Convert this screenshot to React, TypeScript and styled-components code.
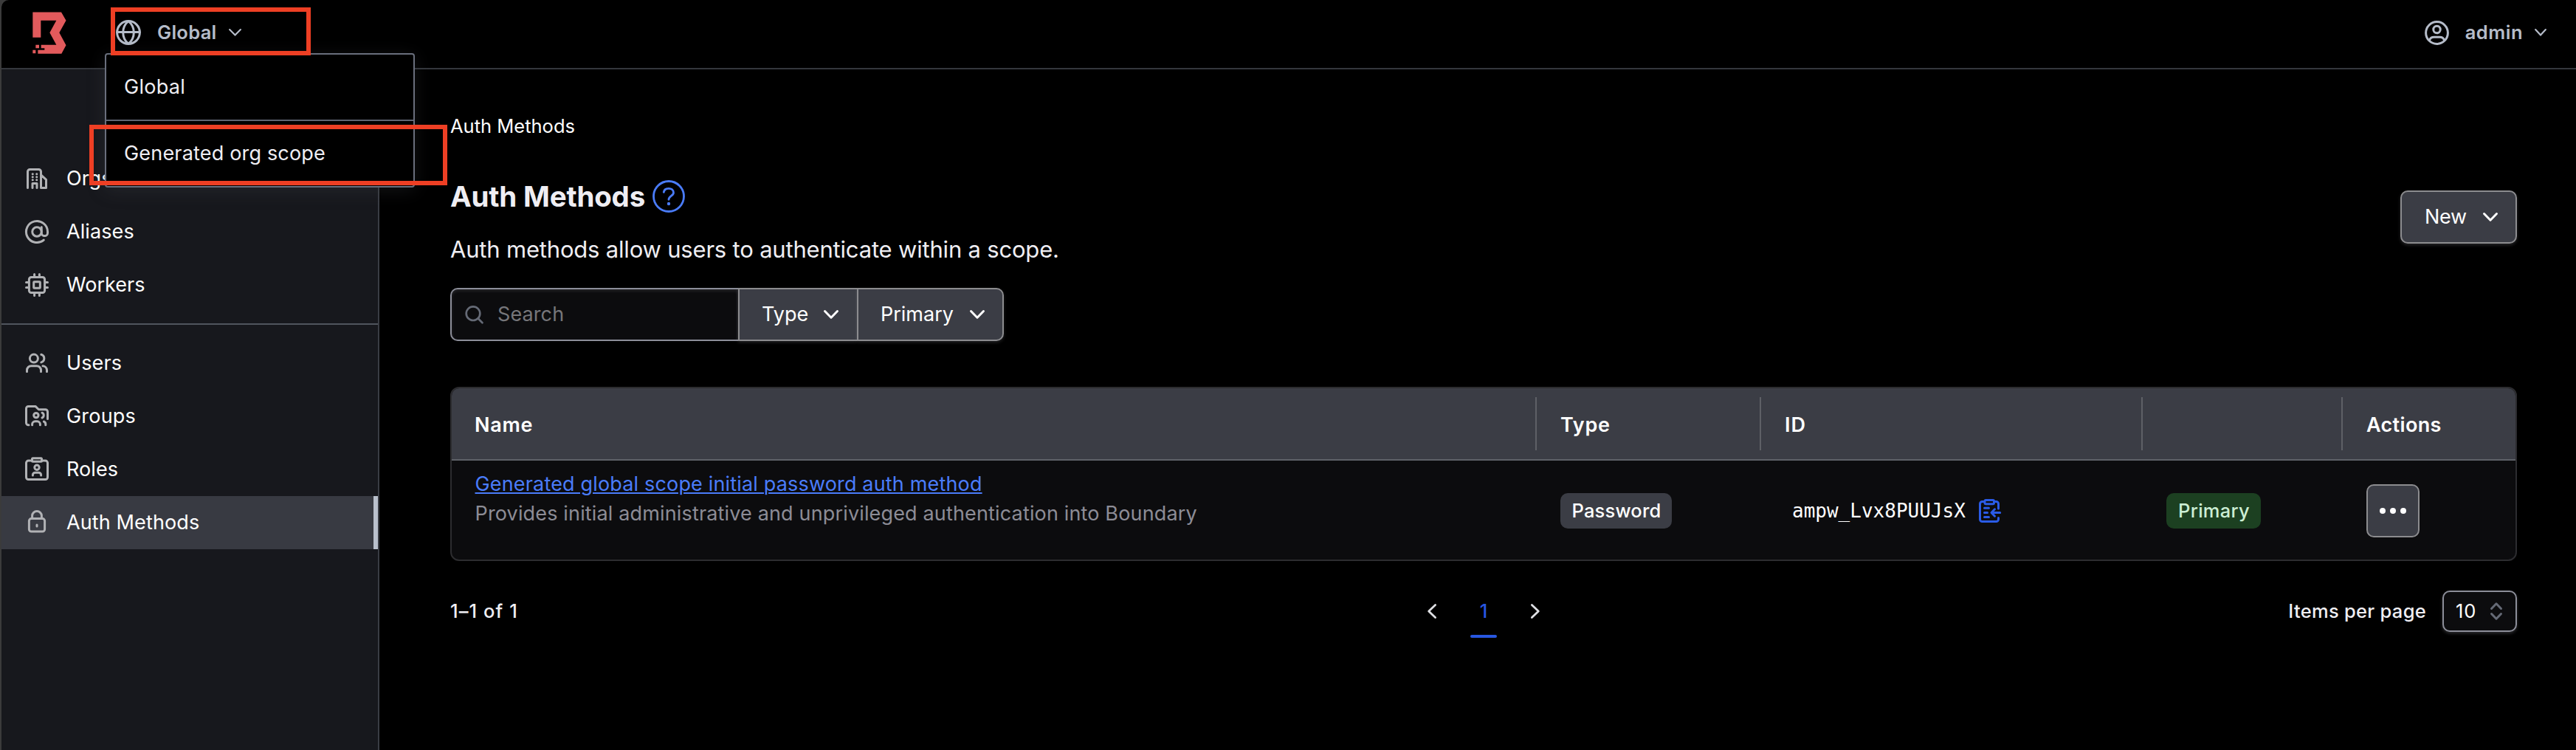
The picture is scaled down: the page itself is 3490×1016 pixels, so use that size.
import React from "react";
import styled, { createGlobalStyle, css } from "styled-components";

const GlobalStyle = createGlobalStyle`
  * { box-sizing: border-box; }
  body {
    margin: 0;
    background: #000;
    font-family: Inter, "Liberation Sans", sans-serif;
    -webkit-font-smoothing: antialiased;
  }
`;

const Window = styled.div`
  position: relative;
  width: 3490px;
  height: 1016px;
  padding-left: 2px;
  background: #3b3b3b;
  overflow: hidden;
`;

const Frame = styled.div`
  display: flex;
  flex-direction: column;
  height: 100%;
  background: #000;
  border-top-left-radius: 10px;
  overflow: hidden;
`;

type TypeProps = { $size?: number; $weight?: number; $track?: number; $color?: string };

const Text = styled.span<TypeProps>`
  font-size: ${(p) => p.$size ?? 27}px;
  font-weight: ${(p) => p.$weight ?? 400};
  letter-spacing: ${(p) => p.$track ?? 0}px;
  color: ${(p) => p.$color ?? "#fff"};
  line-height: 40px;
  white-space: nowrap;
`;

/* Header */

const Header = styled.header`
  flex: none;
  display: flex;
  align-items: center;
  justify-content: space-between;
  height: 94px;
  padding: 0 40px 4px 42px;
  border-bottom: 2px solid #34373d;
`;

const HeaderGroup = styled.div`
  display: flex;
  align-items: center;
`;

const HeaderButton = styled.div<{ $offset?: number; $gap: number }>`
  display: flex;
  align-items: center;
  gap: ${(p) => p.$gap}px;
  margin-left: ${(p) => p.$offset ?? 0}px;
  color: #b5bcc9;
`;

const HeaderLabel = styled(Text)<{ $gap: number }>`
  display: inline-flex;
  align-items: center;
  gap: ${(p) => p.$gap}px;
`;

const ScopeMenu = styled.div`
  position: absolute;
  top: 72px;
  left: 142px;
  width: 420px;
  height: 182px;
  background: #000;
  border: 2px solid #6a6f7d;
  border-radius: 4px;
  box-shadow: 0 4px 24px rgba(70, 72, 80, 0.28);
`;

const ScopeItem = styled.div`
  display: flex;
  align-items: center;
  height: 90px;
  padding-left: 24px;

  &:first-child {
    border-bottom: 2px solid #5f6471;
  }

  & + & {
    height: 88px;
    padding-bottom: 1px;
  }
`;

const Highlight = styled.div<{ $x: number; $y: number; $w: number; $h: number }>`
  position: absolute;
  left: ${(p) => p.$x}px;
  top: ${(p) => p.$y}px;
  width: ${(p) => p.$w}px;
  height: ${(p) => p.$h}px;
  border: 6px solid #ee3f24;
`;

/* Body */

const Body = styled.div`
  flex: 1;
  display: flex;
  min-height: 0;
`;

const Sidebar = styled.nav`
  flex: none;
  width: 512px;
  padding-top: 112px;
  background: #17181d;
  border-right: 2px solid #3a3d44;
`;

const NavItem = styled.a<{ $active?: boolean }>`
  display: flex;
  align-items: center;
  gap: 24px;
  height: 72px;
  padding-left: 32px;
  color: #b1b2b5;
  ${(p) =>
    p.$active &&
    css`
      background: #383a42;
      border-right: 6px solid #b9c0cc;
    `}
`;

const NavDivider = styled.div`
  height: 2px;
  margin: 16px 0;
  background: #50555e;
`;

const Main = styled.main`
  flex: 1;
  display: flex;
  flex-direction: column;
  padding: 57px 80px 0 96px;
`;

const PageHeader = styled.div`
  display: flex;
  justify-content: space-between;
  align-items: flex-start;
  height: 239px;
`;

const HeadingBlock = styled.div`
  display: flex;
  flex-direction: column;
  align-items: flex-start;
`;

const TitleRow = styled.div`
  display: flex;
  align-items: center;
  gap: 10px;
  height: 56px;
  margin: 47px 0 24px;
`;

const Title = styled.h1`
  margin: 0;
  font-size: 38.5px;
  font-weight: 700;
  letter-spacing: -0.2px;
  line-height: 56px;
  color: #efeef3;
`;

const buttonSkin = css`
  background: #3b3d45;
  border: 2px solid #8c8c8f;
`;

const NewButton = styled.button`
  ${buttonSkin}
  display: flex;
  align-items: center;
  gap: 22px;
  width: 158px;
  height: 72px;
  margin-top: 107px;
  padding: 0 0 0 31px;
  border-radius: 10px;
  box-shadow: 0 2px 4px rgba(150, 150, 160, 0.25);
  font-family: inherit;
`;

const FilterBar = styled.div`
  display: flex;
  height: 72px;
`;

const SearchBox = styled.div`
  display: flex;
  align-items: center;
  gap: 19px;
  width: 390px;
  padding-left: 18px;
  background: #0c0c0e;
  border: 2px solid #8c8e99;
  border-right: 0;
  border-radius: 10px 0 0 10px;
  box-shadow: inset 0 2px 4px rgba(150, 150, 160, 0.2);
`;

const FilterButton = styled.button<{ $width: number; $last?: boolean; $gap: number }>`
  ${buttonSkin}
  display: flex;
  align-items: center;
  gap: ${(p) => p.$gap}px;
  width: ${(p) => p.$width}px;
  padding: 0 0 0 30px;
  border-right-width: ${(p) => (p.$last ? 2 : 0)}px;
  border-radius: ${(p) => (p.$last ? "0 10px 10px 0" : 0)};
  box-shadow: 0 2px 4px rgba(150, 150, 160, 0.22);
  font-family: inherit;
`;

const Table = styled.div`
  margin-top: 62px;
  border: 2px solid #2c2c2f;
  border-radius: 12px;
  background: #0c0c0e;
  overflow: hidden;
`;

const Row = styled.div`
  display: grid;
  grid-template-columns: 1468px 304px 517px 271px 1fr;
`;

const HeadRow = styled(Row)`
  height: 98px;
  background: #3b3d45;
  border-bottom: 2px solid #5f6168;
`;

const HeadCell = styled.div`
  display: flex;
  align-items: center;
  margin: 12px 0;
  padding: 4px 0 0 31px;

  & + & {
    padding-left: 32px;
    border-left: 2px solid #5e6066;
  }
`;

const BodyRow = styled(Row)`
  height: 134px;
`;

const Cell = styled.div`
  display: flex;
  align-items: center;
  padding: 2px 0 0 34px;
`;

const NameCell = styled.div`
  display: flex;
  flex-direction: column;
  padding: 12px 0 0 31.5px;
`;

const NameLink = styled(Text)`
  text-decoration: underline;
  text-decoration-thickness: 2px;
  text-underline-offset: 2px;
`;

const Badge = styled.span<{ $width: number; $bg: string }>`
  display: flex;
  align-items: center;
  justify-content: center;
  width: ${(p) => p.$width}px;
  height: 48px;
  padding-left: 1px;
  border-radius: 10px;
  background: ${(p) => p.$bg};
`;

const Mono = styled.span`
  margin: 0 18px 0 10px;
  font: 26px/40px "DejaVu Sans Mono", monospace;
  color: #fff;
`;

const MoreButton = styled.button`
  ${buttonSkin}
  display: flex;
  align-items: center;
  justify-content: center;
  gap: 6px;
  width: 72px;
  height: 72px;
  padding: 0;
  border-radius: 10px;
`;

const Dot = styled.i`
  width: 8px;
  height: 8px;
  border-radius: 50%;
  background: #fff;
`;

const Pagination = styled.div`
  display: grid;
  grid-template-columns: 1fr auto 1fr;
  height: 64px;
  margin-top: 40px;
`;

const PageInfo = styled.div`
  display: flex;
  align-items: center;
  height: 56px;
`;

const Pager = styled.div`
  display: flex;
  gap: 36px;
`;

const PagerArrow = styled.div`
  display: flex;
  align-items: center;
  justify-content: center;
  width: 32px;
  height: 56px;
`;

const CurrentPage = styled.div`
  display: flex;
  flex-direction: column;
  align-items: center;
  justify-content: space-between;
  width: 36px;
  height: 64px;
  padding-top: 8px;

  &::after {
    content: "";
    width: 36px;
    height: 4px;
    border-radius: 2px;
    background: #2857e0;
  }
`;

const PageSize = styled.div`
  display: flex;
  align-items: center;
  justify-content: flex-end;
  gap: 22px;
  height: 56px;
`;

const Select = styled.div`
  display: flex;
  align-items: center;
  justify-content: space-between;
  width: 101px;
  height: 56px;
  padding: 0 18px 0 16px;
  background: #0c0c0e;
  border: 2px solid #8c8e99;
  border-radius: 10px;
  box-shadow: 0 2px 4px rgba(150, 150, 160, 0.3);
`;

/* Icons */

const Stroke = styled.svg<{ $sw?: number; $color?: string }>`
  flex: none;
  display: block;
  overflow: visible;
  color: ${(p) => p.$color ?? "inherit"};
  fill: none;
  stroke: currentColor;
  stroke-width: ${(p) => p.$sw ?? 1.5};
  stroke-linecap: round;
  stroke-linejoin: round;
`;

const NavIcon = ({ children }: { children: React.ReactNode }) => (
  <Stroke width="32" height="32" viewBox="0 0 16 16">{children}</Stroke>
);

const Logo = () => (
  <svg width="46" height="57" viewBox="131 46 138 170" fill="#e25a5c">
    <path d="M132 47H248L267.500 81L240 130L267.500 181L249 215.500H153V201H180V193H166V180H228L201 130L228 81H165V150H132Z" />
    <path d="M144 180H158V193H144ZM132 201H144V214H132Z" />
  </svg>
);

const Globe = () => (
  <Stroke width="34" height="34" viewBox="0 0 34 34" $sw={3}>
    <circle cx="17" cy="17" r="15.4" />
    <path d="M1.600 16.500H32.400" />
    <path d="M17 1.600C12.200 5.500 9.700 11 9.700 17S12.200 28.500 17 32.400C21.800 28.500 24.300 23 24.300 17S21.800 5.500 17 1.600Z" />
  </Stroke>
);

const UserCircle = () => (
  <Stroke width="33" height="33" viewBox="0 0 33 33" $sw={3}>
    <circle cx="16.500" cy="16.500" r="14.900" />
    <circle cx="16.500" cy="12" r="4.700" />
    <path d="M6.500 26.500C7.500 23.500 9.500 22.300 12.500 22.300H20.500C23.500 22.300 25.500 23.500 26.500 26.500" />
  </Stroke>
);

type ChevronProps = { w: number; h: number; sw: number; color: string };
const Chevron = ({ w, h, sw, color }: ChevronProps) => (
  <Stroke width={w} height={h} viewBox={`0 0 ${w} ${h}`} $sw={sw} $color={color}>
    <path d={`M${sw / 2} ${sw / 2}L${w / 2} ${h - sw / 2 - 0.3}L${w - sw / 2} ${sw / 2}`} />
  </Stroke>
);

const Help = () => (
  <Stroke width="44" height="44" viewBox="0 0 44 44" $sw={2.8} $color="#4a7cfb">
    <circle cx="22" cy="22" r="20.500" />
    <path d="M15.300 16.300C15.800 13 18.400 11.300 21.900 11.300C25.700 11.300 28.500 13.400 28.500 16.900C28.500 21.500 22 21.300 22 26.300" />
    <circle cx="22" cy="32" r="2.200" fill="currentColor" stroke="none" />
  </Stroke>
);

const SearchIcon = () => (
  <Stroke width="25" height="25" viewBox="0 0 25 25" $sw={2.7} $color="#656a76">
    <circle cx="11" cy="10.700" r="9.300" />
    <path d="M17.800 17.500L23.500 23.300" />
  </Stroke>
);

const ClipboardCopy = () => (
  <Stroke width="30" height="32" viewBox="0 0 30 32" $sw={3} $color="#2a5be6">
    <path d="M7 3.500H4.500A3 3 0 0 0 1.500 6.500V27.500A3 3 0 0 0 4.500 30.500H23.500A3 3 0 0 0 26.500 27.500V25.500" />
    <path d="M21 3.500H23.500A3 3 0 0 1 26.500 6.500V13" />
    <rect x="8" y="1.500" width="12.500" height="5.200" rx="1.500" />
    <path d="M7.500 12.300H13.500M7.500 18.400H11.500M7.500 24.600H13.500M17.300 18.500H28.700M21.500 13.800L17 18.500L21.500 23.200" />
  </Stroke>
);

const Sort = () => (
  <Stroke width="16" height="24" viewBox="0 0 16 24" $sw={3} $color="#656a76">
    <path d="M1.500 8.500L8 1.800L14.500 8.500M1.500 15.500L8 22.200L14.500 15.500" />
  </Stroke>
);

const OrgIcon = () => (
  <NavIcon>
    <path d="M1.750 14.250V3.250A1.500 1.500 0 0 1 3.250 1.750H9.250A1.500 1.500 0 0 1 10.750 3.250V14.250H14.250V8.700L11 5.700M5 14.250V11.250H8V14.250" />
    <path d="M5.100 4.900H5.150M7.850 4.900H7.900M5.100 6.900H5.150M7.850 6.900H7.900M5.100 8.900H5.150M7.850 8.900H7.900" />
  </NavIcon>
);

const AtIcon = () => (
  <Stroke width="32" height="32" viewBox="1 1 22 22" $sw={2.05}>
    <circle cx="12" cy="12" r="4.300" />
    <path d="M16.300 7.700v5.300a2.850 2.850 0 0 0 5.700 0v-1a10 10 0 1 0-3.600 7.700" />
  </Stroke>
);

const CpuIcon = () => (
  <NavIcon>
    <rect x="2.700" y="2.700" width="10.600" height="10.600" rx="1.500" />
    <rect x="5.850" y="5.850" width="4.300" height="4.300" rx="0.400" />
    <path d="M6.300 .75V2M9.700 .75V2M6.300 14V15.250M9.700 14V15.250M.75 6.300H2M.75 9.700H2M14 6.300H15.250M14 9.700H15.250" />
  </NavIcon>
);

const UsersIcon = () => (
  <NavIcon>
    <circle cx="5.950" cy="4.800" r="2.750" />
    <path d="M1.250 13.750V12.750A2.900 2.900 0 0 1 4.150 9.850H7.850A2.900 2.900 0 0 1 10.750 12.750V13.750M10.900 2.150A2.750 2.750 0 0 1 10.900 7.450M12 9.900A2.900 2.900 0 0 1 14.750 12.750V13.750" />
  </NavIcon>
);

const GroupsIcon = () => (
  <NavIcon>
    <path d="M2.500 13.900H2.250A1.500 1.500 0 0 1 .75 12.400V2.700A1.500 1.500 0 0 1 2.250 1.200H7L9.200 3.350H13.750A1.500 1.500 0 0 1 15.250 4.850V9.700" />
    <circle cx="7.450" cy="7.300" r="1.600" />
    <path d="M4.800 13.900V13.400A2 2 0 0 1 6.800 11.400H8.200A2 2 0 0 1 10.200 13.400V13.900M11.500 5.600A1.850 1.850 0 0 1 11.500 9M12.700 11.500A2 2 0 0 1 13.900 13.400V13.900" />
  </NavIcon>
);

const RolesIcon = () => (
  <NavIcon>
    <path d="M4.500 2.050H2.250A1.500 1.500 0 0 0 .75 3.550V13.250A1.500 1.500 0 0 0 2.250 14.750H13.750A1.500 1.500 0 0 0 15.250 13.250V3.550A1.500 1.500 0 0 0 13.750 2.050H11.500" />
    <rect x="4.750" y="0.350" width="6.500" height="2.300" rx="0.500" />
    <circle cx="8" cy="6.600" r="1.600" />
    <path d="M5.200 12V11.700A1.600 1.600 0 0 1 6.800 10.100H9.200A1.600 1.600 0 0 1 10.800 11.700V12" />
  </NavIcon>
);

const LockIcon = () => (
  <NavIcon>
    <rect x="2.700" y="5.300" width="10.600" height="8.700" rx="1.500" />
    <path d="M4.800 5V3.300A3.200 3 0 0 1 11.200 3.300V5M8 9.500V10.500" />
  </NavIcon>
);

const nav = [
  [
    { label: "Orgs", icon: <OrgIcon />, track: 0.1 },
    { label: "Aliases", icon: <AtIcon />, track: 0.1 },
    { label: "Workers", icon: <CpuIcon />, track: 0 },
  ],
  [
    { label: "Users", icon: <UsersIcon />, track: 0.1 },
    { label: "Groups", icon: <GroupsIcon />, track: 0.2 },
    { label: "Roles", icon: <RolesIcon />, track: 0.1 },
    { label: "Auth Methods", icon: <LockIcon />, track: 0.12, active: true },
  ],
];

const columns = [
  { label: "Name", track: 0.7 },
  { label: "Type", track: 0.7 },
  { label: "ID", track: 1 },
  { label: "", track: 0 },
  { label: "Actions", track: 0.33 },
];

export default function App() {
  return (
    <Window>
      <GlobalStyle />
      <Frame>
        <Header>
          <HeaderGroup>
            <Logo />
            <HeaderButton $offset={67} $gap={22}>
              <Globe />
              <HeaderLabel $gap={16} $size={25.5} $weight={600} $track={0.3} $color="#b5bcc9">
                Global
                <Chevron w={17} h={10} sw={2.2} color="#b5bcc9" />
              </HeaderLabel>
            </HeaderButton>
          </HeaderGroup>
          <HeaderButton $gap={22}>
            <UserCircle />
            <HeaderLabel $gap={16} $size={25.5} $weight={600} $track={0.5} $color="#b5bcc9">
              admin
              <Chevron w={16} h={10} sw={2.2} color="#b5bcc9" />
            </HeaderLabel>
          </HeaderButton>
        </Header>
        <Body>
          <Sidebar>
            {nav.map((group, i) => (
              <React.Fragment key={i}>
                {i > 0 && <NavDivider />}
                {group.map((item) => (
                  <NavItem key={item.label} $active={"active" in item}>
                    {item.icon}
                    <Text $track={item.track}>{item.label}</Text>
                  </NavItem>
                ))}
              </React.Fragment>
            ))}
          </Sidebar>
          <Main>
            <PageHeader>
              <HeadingBlock>
                <Text $size={25.5}>Auth Methods</Text>
                <TitleRow>
                  <Title>Auth Methods</Title>
                  <Help />
                </TitleRow>
                <Text $size={31} $track={-0.19} $color="#efeef3">
                  Auth methods allow users to authenticate within a scope.
                </Text>
              </HeadingBlock>
              <NewButton>
                <Text $track={-0.3}>New</Text>
                <Chevron w={20} h={12} sw={3} color="#fff" />
              </NewButton>
            </PageHeader>
            <FilterBar>
              <SearchBox>
                <SearchIcon />
                <Text $track={0.1} $color="#76767a">Search</Text>
              </SearchBox>
              <FilterButton $width={161} $gap={21}>
                <Text>Type</Text>
                <Chevron w={20} h={12} sw={3} color="#fff" />
              </FilterButton>
              <FilterButton $width={199} $gap={22} $last>
                <Text>Primary</Text>
                <Chevron w={20} h={12} sw={3} color="#fff" />
              </FilterButton>
            </FilterBar>
            <Table>
              <HeadRow>
                {columns.map((c, i) => (
                  <HeadCell key={i}>
                    <Text $weight={600} $track={c.track}>{c.label}</Text>
                  </HeadCell>
                ))}
              </HeadRow>
              <BodyRow>
                <NameCell>
                  <div>
                    <NameLink $track={0.165} $color="#4a7cfb">
                      Generated global scope initial password auth method
                    </NameLink>
                  </div>
                  <Text $track={0.153} $color="#8c8c96">
                    Provides initial administrative and unprivileged authentication into Boundary
                  </Text>
                </NameCell>
                <Cell>
                  <Badge $width={151} $bg="#3b3d45">
                    <Text $size={25.5} $weight={500} $track={0.19}>Password</Text>
                  </Badge>
                </Cell>
                <Cell>
                  <Mono>ampw_Lvx8PUUJsX</Mono>
                  <ClipboardCopy />
                </Cell>
                <Cell>
                  <Badge $width={128} $bg="#1c4021">
                    <Text $size={25.5} $weight={500} $track={0.25} $color="#cceed4">Primary</Text>
                  </Badge>
                </Cell>
                <Cell>
                  <MoreButton>
                    <Dot />
                    <Dot />
                    <Dot />
                  </MoreButton>
                </Cell>
              </BodyRow>
            </Table>
            <Pagination>
              <PageInfo>
                <Text $size={25.5} $weight={500} $track={1.1} $color="#efeef3">1–1 of 1</Text>
              </PageInfo>
              <Pager>
                <PagerArrow>
                  <Stroke width="12" height="20" viewBox="0 0 12 20" $sw={2.8} $color="#dedfe3">
                    <path d="M10.600 1.400L1.700 10L10.600 18.600" />
                  </Stroke>
                </PagerArrow>
                <CurrentPage>
                  <Text $size={25.5} $weight={500} $color="#2857e0">1</Text>
                </CurrentPage>
                <PagerArrow>
                  <Stroke width="12" height="20" viewBox="0 0 12 20" $sw={2.8} $color="#dedfe3">
                    <path d="M1.400 1.400L10.300 10L1.400 18.600" />
                  </Stroke>
                </PagerArrow>
              </Pager>
              <PageSize>
                <Text $size={25.5} $weight={500} $track={0.29} $color="#efeef3">Items per page</Text>
                <Select>
                  <Text $size={25.5} $track={1}>10</Text>
                  <Sort />
                </Select>
              </PageSize>
            </Pagination>
          </Main>
        </Body>
      </Frame>
      <ScopeMenu>
        <ScopeItem>
          <Text $track={0.3} $color="#efeef3">Global</Text>
        </ScopeItem>
        <ScopeItem>
          <Text $track={0.18} $color="#efeef3">Generated org scope</Text>
        </ScopeItem>
      </ScopeMenu>
      <Highlight $x={150} $y={10} $w={271} $h={65} />
      <Highlight $x={121} $y={169} $w={485} $h={82} />
    </Window>
  );
}
